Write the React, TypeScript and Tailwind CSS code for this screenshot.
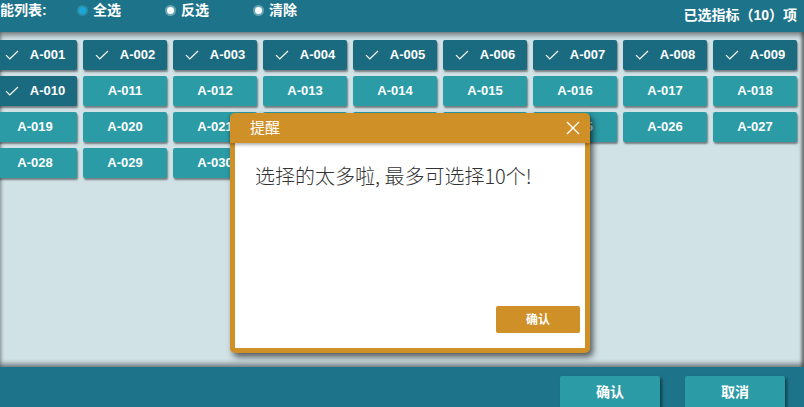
import React from 'react';

const items = Array.from({ length: 30 }, (_, i) => 'A-' + String(i + 1).padStart(3, '0'));

function Check() {
  return (
    <svg width="14" height="10" viewBox="0 0 14 10" fill="none" className="shrink-0">
      <path d="M1 5.2 L4.8 9 L13 1" stroke="white" strokeWidth="1.2" />
    </svg>
  );
}

function Radio({ label, active }: { label: string; active?: boolean }) {
  return (
    <div className="w-[88px] flex items-center gap-[5px]">
      {active ? (
        <span className="w-[11px] h-[11px] rounded-full bg-[#1ba8d8] border-[2px] border-[#2a8fa8]" />
      ) : (
        <span className="w-[11px] h-[11px] rounded-full bg-white border-[2px] border-[#6aa5b4]" />
      )}
      <span>{label}</span>
    </div>
  );
}

export default function App() {
  return (
    <div
      className="w-[804px] h-[407px] flex flex-col overflow-hidden bg-[#1d7389] relative"
      style={{ fontFamily: '"Liberation Sans", "Noto Sans CJK SC", sans-serif' }}
    >
      <div className="h-[32px] shrink-0 flex text-white text-[14px] font-bold">
        <div className="flex items-center h-[20px]">
          <span className="w-[77px] shrink-0 whitespace-nowrap ml-[-14px] pl-[0px]">功能列表:</span>
          <div className="flex ml-[14px]">
            <Radio label="全选" active />
            <Radio label="反选" />
            <Radio label="清除" />
          </div>
        </div>
        <span className="ml-auto mr-[7px] mt-[5px]">已选指标（10）项</span>
      </div>

      <div className="flex-1 bg-[#d1e2e6] shadow-[inset_0_4px_4px_rgba(0,0,0,0.35),inset_0_-4px_4px_rgba(0,0,0,0.35),inset_-3px_0_3px_rgba(0,0,0,0.3)]">
        <div className="ml-[-7px] mt-[8px] grid grid-cols-[repeat(9,84px)] auto-rows-[30px] gap-[6px]">
          {items.map((it, i) => {
            const sel = i < 10;
            return (
              <div
                key={it}
                className={
                  'rounded-[2px] flex items-center justify-center gap-[11px] text-white text-[13px] font-bold shadow-[1px_2px_2px_rgba(0,0,0,0.45)] ' +
                  (sel ? 'bg-[#1b6b80]' : 'bg-[#2b9ba6]')
                }
              >
                {sel && <Check />}
                <span>{it}</span>
              </div>
            );
          })}
        </div>
      </div>

      <div className="h-[40px] shrink-0 flex items-start justify-end pr-[19px] pt-[9px] gap-[25px]">
        <button className="w-[100px] h-[33px] bg-[#2b9ba6] rounded-[2px] text-white text-[14px] font-bold shadow-[2px_2px_3px_rgba(0,0,0,0.45)]">
          确认
        </button>
        <button className="w-[100px] h-[33px] bg-[#2b9ba6] rounded-[2px] text-white text-[14px] font-bold shadow-[2px_2px_3px_rgba(0,0,0,0.45)]">
          取消
        </button>
      </div>

      <div className="absolute left-[230px] top-[113px] w-[360px] h-[240px] rounded-[5px] bg-[#d09028] flex flex-col shadow-[3px_4px_6px_rgba(0,0,0,0.6)]">
        <div className="h-[30px] shrink-0 flex items-center pl-[20px] pr-[10px] text-white text-[15px] shadow-[0_2px_3px_rgba(0,0,0,0.3)] relative z-10">
          <span>提醒</span>
          <svg width="14" height="14" viewBox="0 0 14 14" className="ml-auto" fill="none">
            <path d="M1 1 L13 13 M13 1 L1 13" stroke="white" strokeWidth="1.4" />
          </svg>
        </div>
        <div className="flex-1 mx-[5px] mb-[5px] bg-white flex flex-col">
          <div
            className="pl-[20px] pt-[20px] text-[20px] text-[#333333] leading-[26px] font-light"
            style={{ fontFamily: '"Noto Sans CJK SC", "Liberation Sans", sans-serif' }}
          >
            选择的太多啦, 最多可选择10个!
          </div>
          <div className="mt-auto mb-[15px] mr-[5px] flex justify-end">
            <button className="w-[84px] h-[27px] bg-[#d09028] rounded-[2px] text-white text-[12px] font-bold">
              确认
            </button>
          </div>
        </div>
      </div>
    </div>
  );
}
